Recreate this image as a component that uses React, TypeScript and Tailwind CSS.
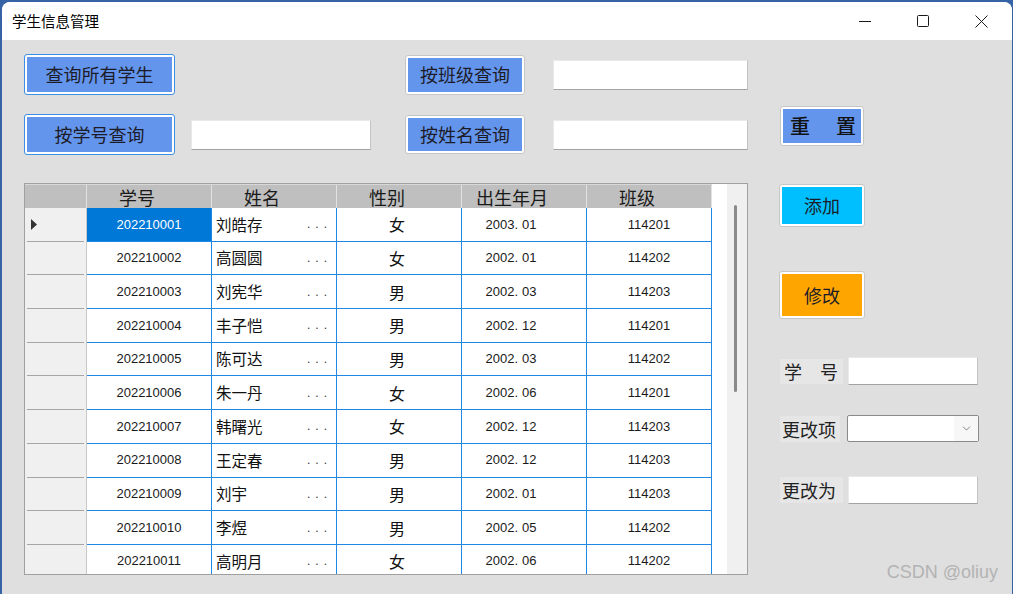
import React from 'react';
import { ChevronDown } from 'lucide-react';

type Student = {
  id: string;
  name: string;
  gender: string;
  birth: string;
  cls: string;
};

const students: Student[] = [
  { id: '202210001', name: '刘皓存', gender: '女', birth: '2003.01', cls: '114201' },
  { id: '202210002', name: '高圆圆', gender: '女', birth: '2002.01', cls: '114202' },
  { id: '202210003', name: '刘宪华', gender: '男', birth: '2002.03', cls: '114203' },
  { id: '202210004', name: '丰子恺', gender: '男', birth: '2002.12', cls: '114201' },
  { id: '202210005', name: '陈可达', gender: '男', birth: '2002.03', cls: '114202' },
  { id: '202210006', name: '朱一丹', gender: '女', birth: '2002.06', cls: '114201' },
  { id: '202210007', name: '韩曙光', gender: '女', birth: '2002.12', cls: '114203' },
  { id: '202210008', name: '王定春', gender: '男', birth: '2002.12', cls: '114203' },
  { id: '202210009', name: '刘宇', gender: '男', birth: '2002.01', cls: '114203' },
  { id: '202210010', name: '李煜', gender: '男', birth: '2002.05', cls: '114202' },
  { id: '202210011', name: '高明月', gender: '女', birth: '2002.06', cls: '114202' },
];

const headers = ['学号', '姓名', '性别', '出生年月', '班级'];

// WinForms style button: thin outer border, white inner ring, flat fill
const WinButton: React.FC<{ className: string; fill: string; focused?: boolean; children: React.ReactNode }> = ({
  className,
  fill,
  focused,
  children,
}) => (
  <div
    className={`${className} shrink-0 rounded-[3px] border bg-white p-[2px] ${
      focused ? 'border-[#3a8ee6]' : 'border-[#c6c6c6]'
    }`}
  >
    <div className={`flex h-full w-full items-center justify-center text-[18px] text-[#1c1c28] ${fill}`}>
      {children}
    </div>
  </div>
);

const TextBox: React.FC<{ className: string }> = ({ className }) => (
  <div
    className={`${className} shrink-0 border border-[#e9e9e9] border-r-[#c4c4c4] border-b-[#a3a3a3] bg-white`}
  />
);

const Label: React.FC<{ className: string; children: React.ReactNode }> = ({ className, children }) => (
  <div className={`${className} flex shrink-0 items-center bg-[#e6e6e6] text-[18px] leading-none text-[#222]`}>
    {children}
  </div>
);

const App: React.FC = () => {
  return (
    <div className="h-[594px] w-[1013px] overflow-hidden bg-[#3563a6] pl-[2px] pt-[2px] font-['Noto_Sans_CJK_SC',sans-serif]">
      <div className="flex h-[592px] w-[1010px] flex-col overflow-hidden rounded-t-[8px] bg-[#dfdfdf]">
        {/* Title bar */}
        <div className="flex h-[38px] shrink-0 items-center bg-white">
          <div className="pl-[10px] text-[14.5px] text-black">学生信息管理</div>
          <div className="ml-auto mr-[2px] flex h-full">
            <div className="flex h-full w-[58px] items-center justify-center">
              <svg width="12" height="12" viewBox="0 0 12 12">
                <line x1="0" y1="6.5" x2="12" y2="6.5" stroke="#1a1a1a" strokeWidth="1" />
              </svg>
            </div>
            <div className="flex h-full w-[58px] items-center justify-center">
              <svg width="12" height="12" viewBox="0 0 12 12">
                <rect x="0.5" y="0.5" width="11" height="11" fill="none" stroke="#1a1a1a" strokeWidth="1" rx="1" />
              </svg>
            </div>
            <div className="flex h-full w-[58px] items-center justify-center">
              <svg width="13" height="13" viewBox="0 0 13 13">
                <path d="M0.5 0.5 L12.5 12.5 M12.5 0.5 L0.5 12.5" stroke="#1a1a1a" strokeWidth="1" />
              </svg>
            </div>
          </div>
        </div>

        {/* Form body */}
        <div className="relative flex flex-1 pl-[22px]">
          <div className="flex w-[724px] flex-col pt-[14px]">
            <div className="flex h-[41px] items-center">
              <WinButton className="h-[41px] w-[151px]" fill="bg-[#6495ed]" focused>
                查询所有学生
              </WinButton>
              <WinButton className="ml-[230px] h-[40px] w-[120px]" fill="bg-[#6495ed]">
                按班级查询
              </WinButton>
              <TextBox className="ml-[28px] h-[30px] w-[195px]" />
            </div>
            <div className="mt-[19px] flex h-[41px] items-center">
              <WinButton className="h-[41px] w-[151px]" fill="bg-[#6495ed]" focused>
                按学号查询
              </WinButton>
              <TextBox className="ml-[16px] h-[30px] w-[180px]" />
              <WinButton className="ml-[34px] h-[39px] w-[120px]" fill="bg-[#6495ed]">
                按姓名查询
              </WinButton>
              <TextBox className="ml-[28px] h-[30px] w-[195px]" />
            </div>

            {/* Data grid */}
            <div className="mt-[28px] flex h-[392px] w-[724px] border border-[#a0a0a0] bg-white">
              <div className="flex-1 overflow-hidden">
                <div className="flex h-[24px] w-[687px] border-t border-[#d8d8d8] bg-[#bfbfbf]">
                  <div className="h-full w-[62px] shrink-0 border-r border-[#e2e2e2]" />
                  {headers.map((h) => (
                    <div
                      key={h}
                      className="flex h-full w-[125px] shrink-0 items-center justify-center border-r border-[#e2e2e2] pr-[24px] text-[18px] leading-none text-[#1a1a1a]"
                    >
                      {h}
                    </div>
                  ))}
                </div>
                {students.map((s, i) => {
                  const [year, month] = s.birth.split('.');
                  return (
                    <div key={s.id} className="flex h-[33.7px] w-[687px]">
                      <div className="flex h-full w-[62px] shrink-0 flex-col border-r border-[#c8c8c8] bg-[#f0f0f0]">
                        <div className="flex flex-1 items-center pl-[6px]">
                          {i === 0 && (
                            <svg width="6" height="11" viewBox="0 0 6 11">
                              <polygon points="0,0 6,5.5 0,11" fill="#333" />
                            </svg>
                          )}
                        </div>
                        <div className="mx-[2px] h-[1px] bg-[#a6a6a6]" />
                      </div>
                      <div
                        className={`flex h-full w-[125px] shrink-0 items-center justify-center border-r border-b border-[#1f87e6] font-['Liberation_Sans',sans-serif] text-[13px] ${
                          i === 0 ? 'bg-[#0078d7] text-white' : 'text-[#1a1a1a]'
                        }`}
                      >
                        {s.id}
                      </div>
                      <div className="flex h-full w-[125px] shrink-0 items-center border-r border-b border-[#1f87e6] pl-[4px] pr-[4px] text-[15.5px] text-[#111]">
                        <span>{s.name}</span>
                        <span className="ml-auto font-['Liberation_Sans',sans-serif] text-[12px] tracking-[5px] text-[#333]">
                          ...
                        </span>
                      </div>
                      <div className="flex h-full w-[125px] shrink-0 items-center justify-center border-r border-b border-[#1f87e6] pr-[4px] text-[16px] text-[#111]">
                        {s.gender}
                      </div>
                      <div className="flex h-full w-[125px] shrink-0 items-center justify-center border-r border-b border-[#1f87e6] pr-[26px] font-['Liberation_Sans',sans-serif] text-[13px] text-[#1a1a1a]">
                        <span>
                          {year}.<span className="ml-[4px]">{month}</span>
                        </span>
                      </div>
                      <div className="flex h-full w-[125px] shrink-0 items-center justify-center border-r border-b border-[#1f87e6] font-['Liberation_Sans',sans-serif] text-[13px] text-[#1a1a1a]">
                        {s.cls}
                      </div>
                    </div>
                  );
                })}
              </div>
              {/* vertical scrollbar */}
              <div className="flex w-[20px] shrink-0 justify-start bg-[#f0f0f0] pl-[7px] pt-[21px]">
                <div className="h-[187px] w-[3px] rounded-full bg-[#8a8a8a]" />
              </div>
            </div>
          </div>

          {/* Right side controls */}
          <div className="ml-[32px] flex flex-col pt-[66px]">
            <WinButton className="h-[40px] w-[84px]" fill="bg-[#6495ed]">
              <span className="flex w-full justify-start gap-[26px] pl-[7px] text-[20px] font-medium text-[#111]">
                <span>重</span>
                <span>置</span>
              </span>
            </WinButton>
            <WinButton className="-ml-[1px] mt-[38px] h-[43px] w-[86px]" fill="bg-[#00bfff]">
              添加
            </WinButton>
            <WinButton className="-ml-[1px] mt-[44px] h-[48px] w-[86px]" fill="bg-[#ffa500]">
              修改
            </WinButton>

            <div className="mt-[38px] flex items-center">
              <Label className="h-[25px] w-[63px] pl-[4px]">学　号</Label>
              <TextBox className="ml-[5px] h-[28px] w-[130px]" />
            </div>
            <div className="mt-[30px] flex items-center">
              <Label className="h-[26px] w-[60px] pl-[2px]">更改项</Label>
              <div className="ml-[7px] flex h-[27px] w-[132px] shrink-0 items-center rounded-[2px] border border-[#8a8a8a] bg-white">
                <div className="ml-[2px] h-[21px] flex-1 bg-white" />
                <div className="flex h-full w-[24px] items-center justify-center bg-[#f7f7f7]">
                  <ChevronDown size={13} strokeWidth={1.4} color="#666" />
                </div>
              </div>
            </div>
            <div className="mt-[34px] flex items-center">
              <Label className="h-[26px] w-[63px] pl-[2px]">更改为</Label>
              <TextBox className="ml-[5px] h-[28px] w-[130px]" />
            </div>
          </div>

          {/* watermark overlay */}
          <div className="pointer-events-none absolute bottom-[8px] right-[14px] font-['Liberation_Sans',sans-serif] text-[18px] text-[#b3b3b3]">
            CSDN @oliuy
          </div>
        </div>
      </div>
    </div>
  );
};

export default App;
